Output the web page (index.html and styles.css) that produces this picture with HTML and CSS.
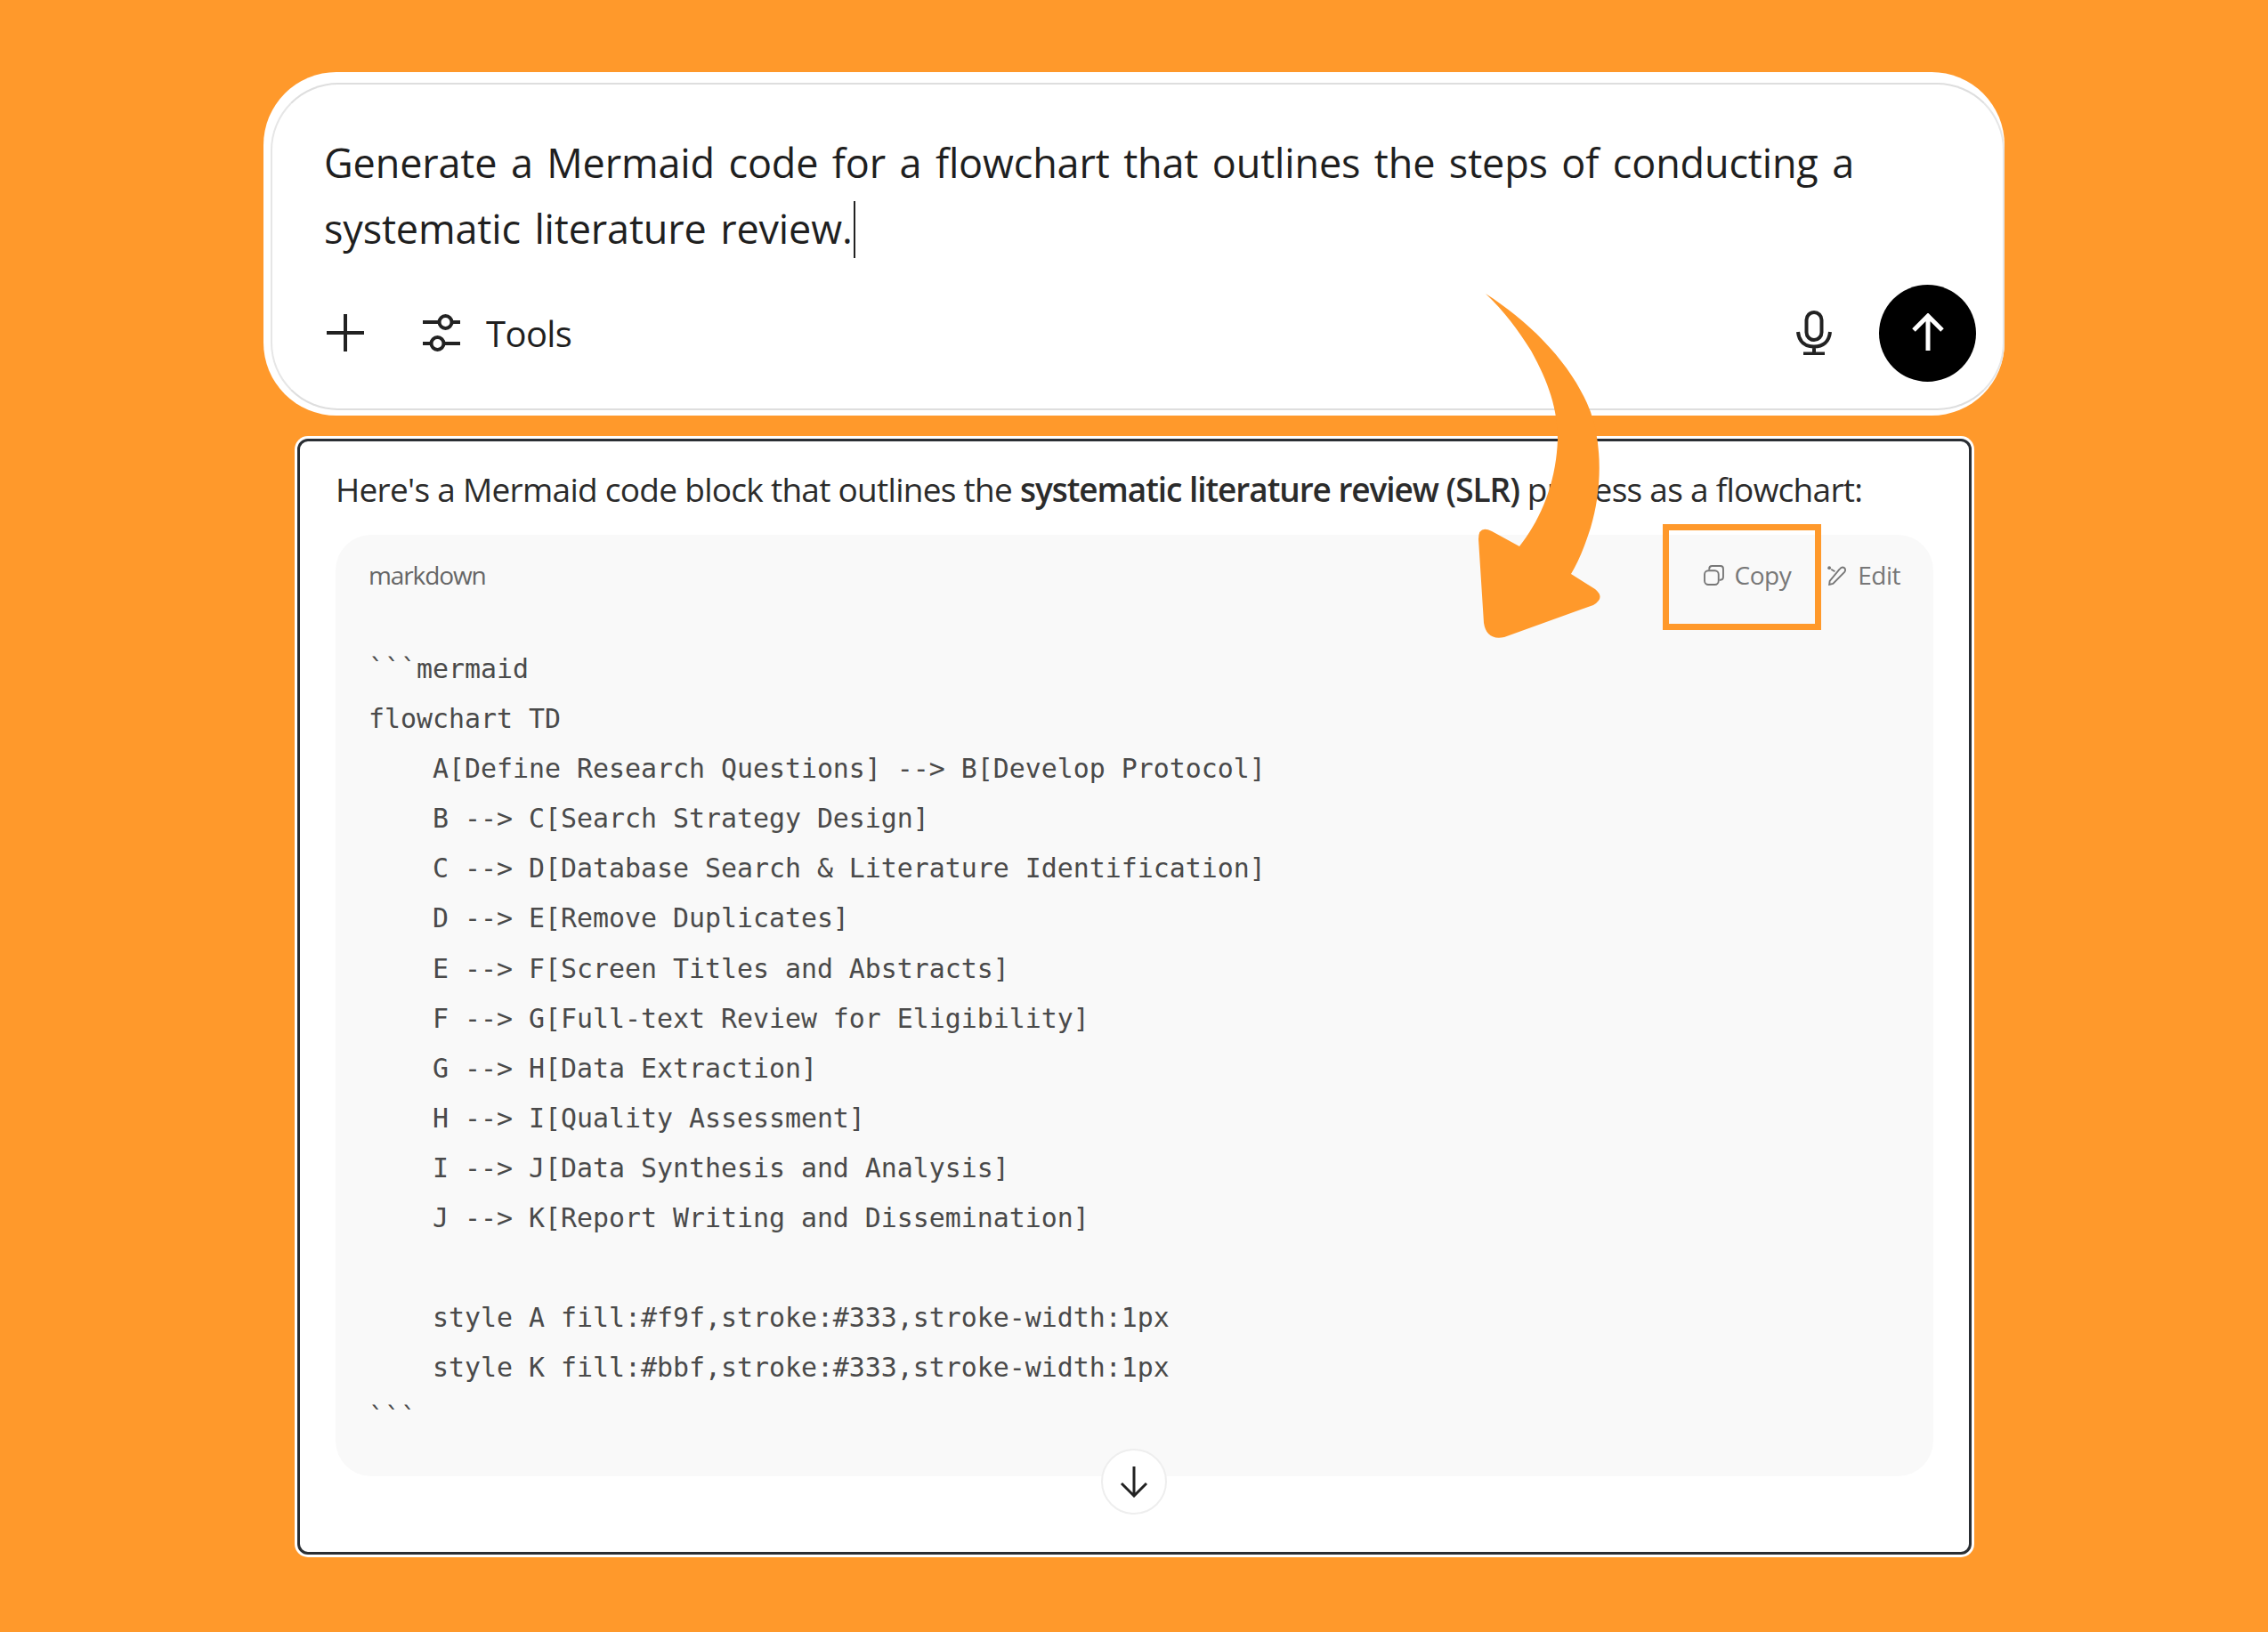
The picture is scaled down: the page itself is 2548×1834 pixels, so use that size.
FILE: index.html
```html
<!DOCTYPE html>
<html lang="en">
<head>
<meta charset="utf-8">
<title>Mermaid prompt</title>
<link rel="stylesheet" href="styles.css">
</head>
<body>
<main class="stage">
  <section class="composer">
    <div class="composer-inner">
      <p class="prompt">Generate a Mermaid code for a flowchart that outlines the steps of conducting a systematic literature review.<span class="caret"></span></p>
      <div class="toolbar">
        <svg class="icon-plus" viewBox="0 0 44 44"><path d="M22 1v42M1 22h42"/></svg>
        <svg class="icon-sliders" viewBox="0 0 44 46"><path d="M1 11h19M33 11h10M1 35h10M24 35h19"/><circle cx="26.500" cy="11" r="7"/><circle cx="17.500" cy="35" r="7"/></svg>
        <span class="tools">Tools</span>
        <svg class="icon-mic" viewBox="0 0 40 50"><rect x="11.500" y="2" width="17" height="31" rx="8.500"/><path d="M2 24c1 11 8 16.500 18 16.500S37 35 38 24M20 40.500V48M8 48.500h24"/></svg>
        <div class="send"><svg viewBox="0 0 40 44"><path d="M20 42V3M4 19 20 3l16 16"/></svg></div>
      </div>
    </div>
  </section>
  <section class="answer">
    <p class="intro">Here's a Mermaid code block that outlines the <strong>systematic literature review (SLR)</strong> process as a flowchart:</p>
    <div class="block">
      <div class="block-head">
        <span class="lang">markdown</span>
        <span class="action action-copy"><svg viewBox="0 0 22 22"><rect x="1" y="6" width="15" height="15" rx="4"/><path d="M6 5V4a3 3 0 0 1 3-3h9a3 3 0 0 1 3 3v9a3 3 0 0 1-3 3h-1"/></svg>Copy</span>
        <span class="action action-edit"><svg viewBox="0 0 22 22"><path d="M7 20l-4 1 .5-4L14 4.500c1.500-2 3.500-2.500 5-1.500s1.500 3 .3 4.500z"/><circle cx="3" cy="3" r="1.800" class="dot"/><path d="M5 4.500 9 7"/></svg>Edit</span>
        <div class="copy-highlight"></div>
      </div>
<pre class="code">```mermaid
flowchart TD
    A[Define Research Questions] --&gt; B[Develop Protocol]
    B --&gt; C[Search Strategy Design]
    C --&gt; D[Database Search &amp; Literature Identification]
    D --&gt; E[Remove Duplicates]
    E --&gt; F[Screen Titles and Abstracts]
    F --&gt; G[Full-text Review for Eligibility]
    G --&gt; H[Data Extraction]
    H --&gt; I[Quality Assessment]
    I --&gt; J[Data Synthesis and Analysis]
    J --&gt; K[Report Writing and Dissemination]

    style A fill:#f9f,stroke:#333,stroke-width:1px
    style K fill:#bbf,stroke:#333,stroke-width:1px
```</pre>
      <div class="scroll-down"><svg viewBox="0 0 32 36"><path d="M16 1v33M2 20l14 14 14-14"/></svg></div>
    </div>
  </section>
  <svg class="big-arrow" viewBox="0 0 2548 1834"><path d="M1669 330C1722 364 1768 412 1787 463 1800 500 1800 550 1787 593 1780 615 1773 632 1765 645L1792 662Q1804 672 1790 680L1690 716Q1670 720 1667 700L1661 606Q1661 590 1676 597L1707 614C1730 585 1748 545 1750 494 1750 460 1740 430 1720 394 1705 370 1690 350 1669 330Z"/></svg>
</main>
</body>
</html>
```
FILE: styles.css
```css
* { box-sizing: border-box; }
html, body { margin: 0; padding: 0; }
body { background: #ff992b; font-family: "Open Sans", "Noto Sans", sans-serif; color: #1f1f1f; }
.stage { position: relative; width: 2548px; height: 1834px; padding-top: 81px; overflow: hidden; }

.composer { width: 1956px; height: 386px; margin-left: 296px; background: #fff; border-radius: 82px; padding: 12px 0 6px 8px; }
.composer-inner { height: 100%; border: 2px solid #dedede; border-left-color: #e6e6e6; border-right-color: #e6e6e6; border-radius: 76px; padding: 51px 30px 0 58px; }
.prompt { margin: 0; font-size: 45px; line-height: 74px; letter-spacing: -.15px; word-spacing: 4px; width: 1800px; color: #1f1f1f; }
.caret { display: inline-block; width: 2px; height: 64px; background: #222; vertical-align: -16px; margin-left: 1px; }
.toolbar { display: flex; align-items: center; margin-top: 25px; height: 110px; }
.icon-plus { width: 44px; height: 44px; margin-left: 2px; fill: none; stroke: #222; stroke-width: 4; }
.icon-sliders { width: 44px; height: 46px; margin-left: 64px; fill: none; stroke: #222; stroke-width: 4; }
.tools { font-size: 40px; margin-left: 28px; letter-spacing: -.6px; color: #1f1f1f; }
.icon-mic { width: 40px; height: 50px; margin-left: auto; fill: none; stroke: #222; stroke-width: 4; }
.send { width: 109px; height: 109px; margin-left: 53px; border-radius: 50%; background: #000; display: flex; align-items: center; justify-content: center; }
.send svg { width: 40px; height: 44px; fill: none; stroke: #fff; stroke-width: 5; }

.answer { width: 1881px; height: 1254px; margin: 26px 0 0 334px; background: #fff; border: 3px solid #2a2e33; border-radius: 12px; box-shadow: 0 0 0 3px #fff; padding: 29px 40px 0 40px; }
.intro { margin: 0; font-size: 37px; line-height: 50px; letter-spacing: -.72px; white-space: nowrap; color: #2b2b2b; }
.intro strong { font-weight: 600; letter-spacing: -1.050px; }
.block { position: relative; margin-top: 26px; height: 1058px; background: #f9f9f9; border-radius: 40px; padding: 0 37px; }
.block-head { position: relative; display: flex; align-items: center; height: 90px; }
.lang { font-size: 28px; color: #666; letter-spacing: -1.1px; }
.action { display: inline-flex; align-items: center; font-size: 28px; color: #777; letter-spacing: -.5px; }
.action svg { width: 23px; height: 23px; fill: none; stroke: #777; stroke-width: 1.800; margin-right: 12px; }
.action-copy { margin-left: auto; }
.action-edit { margin-left: 40px; }
.dot { fill: #777; stroke: none; }
.copy-highlight { position: absolute; right: 89px; top: -12px; width: 178px; height: 119px; border: 7px solid #ff992b; }
.code { margin: 33px 0 0; font-family: "DejaVu Sans Mono", "Liberation Mono", monospace; font-size: 29.900px; line-height: 56.100px; color: #4a4a4a; }
.scroll-down { position: absolute; left: 50%; bottom: -43px; width: 74px; height: 74px; margin-left: -38px; background: #fff; border: 2px solid #eee; border-radius: 50%; display: flex; align-items: center; justify-content: center; }
.scroll-down svg { width: 32px; height: 36px; fill: none; stroke: #222; stroke-width: 3; }

.big-arrow { position: absolute; left: 0; top: 0; width: 2548px; height: 1834px; fill: #ff992b; pointer-events: none; }
```
